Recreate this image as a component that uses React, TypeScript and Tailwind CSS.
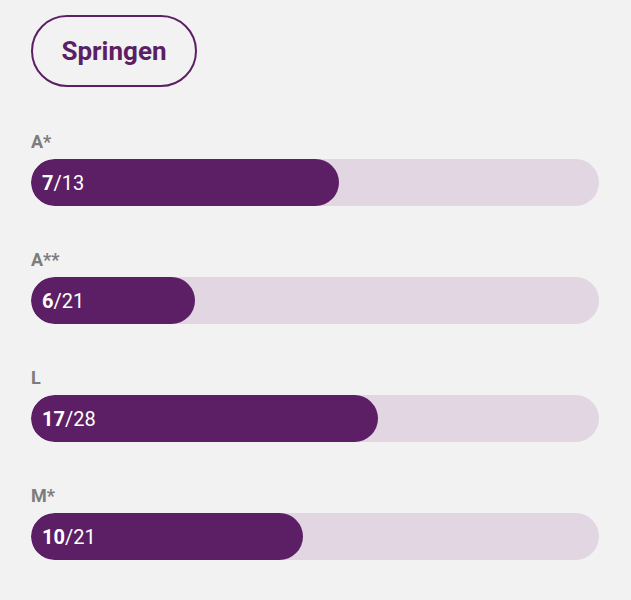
const ROWS = [
  { label: "A*", done: 7, total: 13 },
  { label: "A**", done: 6, total: 21 },
  { label: "L", done: 17, total: 28 },
  { label: "M*", done: 10, total: 21 },
];

function ProgressRow({ label, done, total }: { label: string; done: number; total: number }) {
  const pct = (done / total) * 100;
  return (
    <div>
      <div className="h-6 text-[18px] leading-6 font-bold text-[#7c7c7c]">{label}</div>
      <div className="relative mt-[5px] h-[47px] rounded-full bg-[#e1d6e2] overflow-hidden">
        <div className="h-full rounded-full bg-[#5c1f65]" style={{ width: `calc(${pct}% + 2px)` }} />
        <div className="absolute inset-y-0 left-[11px] flex items-center text-[20px] text-white">
          <span className="font-bold">{done}</span>
          <span>/{total}</span>
        </div>
      </div>
    </div>
  );
}

export default function App() {
  return (
    <div className="min-h-[600px] bg-[#f2f2f2] pl-[31px] pr-[32px] pt-[15px] font-['Roboto',sans-serif]">
      <button className="flex h-[72px] w-[166px] items-center justify-center rounded-full border-2 border-[#5c1f65] text-[26px] font-bold text-[#5c1f65]">
        Springen
      </button>
      <div className="mt-[43px] flex flex-col gap-[42px]">
        {ROWS.map((r) => (
          <ProgressRow key={r.label} {...r} />
        ))}
      </div>
    </div>
  );
}
